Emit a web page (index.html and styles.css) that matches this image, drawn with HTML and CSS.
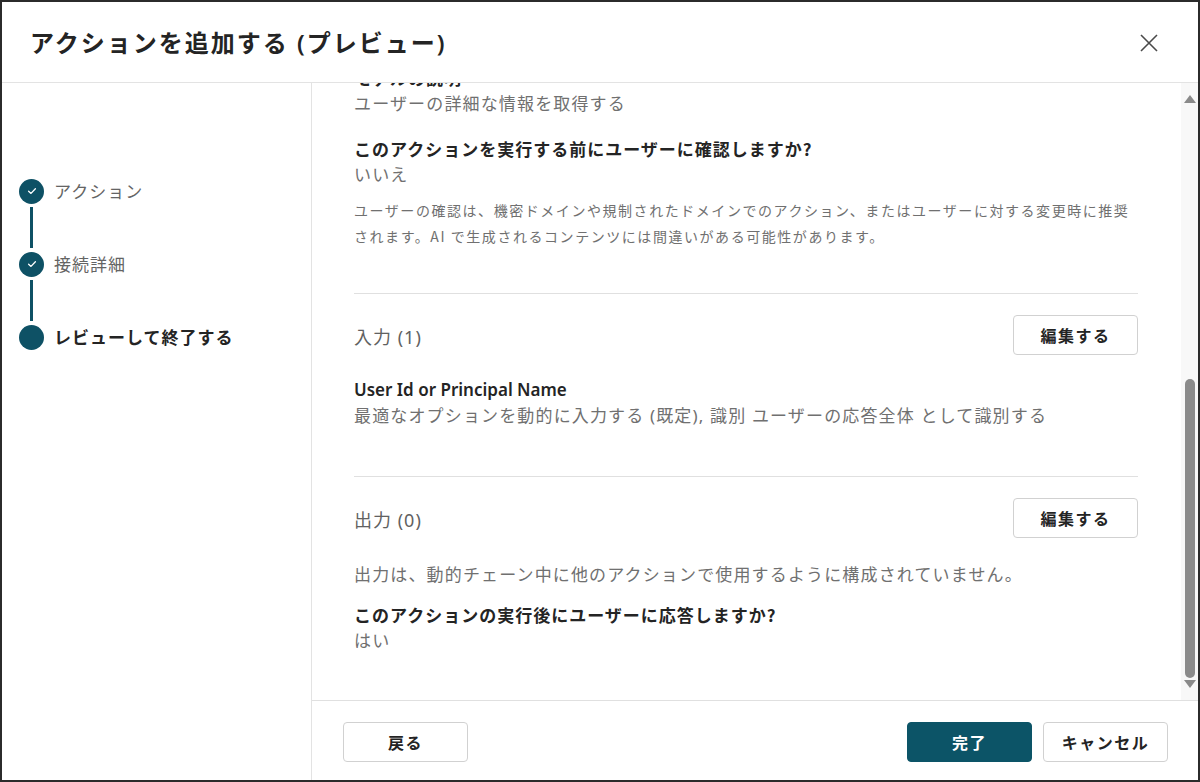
FILE: index.html
```html
<!DOCTYPE html>
<html lang="ja">
<head>
<meta charset="utf-8">
<title>アクションを追加する</title>
<link rel="stylesheet" href="styles.css">
</head>
<body>
<div class="dialog">
  <header class="dlg-header">
    <h1 class="dlg-title">アクションを追加する (プレビュー)</h1>
    <button class="close-btn" aria-label="閉じる">
      <svg width="18" height="18" viewBox="0 0 18 18"><path d="M1 1 L17 17 M17 1 L1 17" stroke="#4a4a4a" stroke-width="1.6" fill="none"/></svg>
    </button>
  </header>
  <div class="dlg-main">
    <nav class="stepper">
      <div class="step done">
        <span class="step-dot"><svg width="12" height="12" viewBox="0 0 12 12"><path d="M2.6 6.2 L5 8.4 L9.4 3.8" stroke="#fff" stroke-width="1.3" fill="none" stroke-linecap="round" stroke-linejoin="round"/></svg></span>
        <span class="step-label">アクション</span>
      </div>
      <div class="step-line"></div>
      <div class="step done">
        <span class="step-dot"><svg width="12" height="12" viewBox="0 0 12 12"><path d="M2.6 6.2 L5 8.4 L9.4 3.8" stroke="#fff" stroke-width="1.3" fill="none" stroke-linecap="round" stroke-linejoin="round"/></svg></span>
        <span class="step-label">接続詳細</span>
      </div>
      <div class="step-line"></div>
      <div class="step current">
        <span class="step-dot"></span>
        <span class="step-label">レビューして終了する</span>
      </div>
    </nav>
    <section class="panel">
      <div class="scroll-area">
        <div class="scroll-content">
          <div class="inner">
            <div class="f-label">モデルの説明</div>
            <div class="f-value">ユーザーの詳細な情報を取得する</div>
            <div class="f-label gap-19">このアクションを実行する前にユーザーに確認しますか?</div>
            <div class="f-value">いいえ</div>
            <p class="hint">ユーザーの確認は、機密ドメインや規制されたドメインでのアクション、またはユーザーに対する変更時に推奨されます。AI で生成されるコンテンツには間違いがある可能性があります。</p>

            <hr class="divider d-44">
            <div class="sec-head">
              <span class="sec-title">入力 (1)</span>
              <button class="btn">編集する</button>
            </div>
            <div class="param-name">User Id or Principal Name</div>
            <div class="f-value">最適なオプションを動的に入力する (既定), 識別 ユーザーの応答全体 として識別する</div>

            <hr class="divider d-47">
            <div class="sec-head">
              <span class="sec-title">出力 (0)</span>
              <button class="btn">編集する</button>
            </div>
            <div class="f-value gap-24">出力は、動的チェーン中に他のアクションで使用するように構成されていません。</div>
            <div class="f-label gap-14">このアクションの実行後にユーザーに応答しますか?</div>
            <div class="f-value">はい</div>
          </div>
        </div>
        <div class="scrollbar">
          <span class="sb-up"></span>
          <div class="sb-track"><div class="sb-thumb"></div></div>
          <span class="sb-down"></span>
        </div>
      </div>
      <footer class="dlg-footer">
        <button class="btn">戻る</button>
        <div class="footer-right">
          <button class="btn primary">完了</button>
          <button class="btn">キャンセル</button>
        </div>
      </footer>
    </section>
  </div>
</div>
</body>
</html>
```

FILE: styles.css
```css
* { box-sizing: border-box; }
html, body { margin: 0; padding: 0; background: #fff; }
body {
  font-family: "Noto Sans", "Noto Sans CJK JP", sans-serif;
  color: #242424;
}
.dialog {
  width: 1200px;
  height: 782px;
  border: 2px solid #2b2b2b;
  display: flex;
  flex-direction: column;
  background: #fff;
  overflow: hidden;
}
.dlg-header {
  height: 81px;
  flex: none;
  border-bottom: 1px solid #e3e3e3;
  display: flex;
  align-items: center;
  justify-content: space-between;
  padding: 2px 40px 0 28px;
}
.dlg-title {
  margin: 0;
  font-size: 24px;
  letter-spacing: 2px;
  font-weight: 600;
  line-height: 32px;
  color: #242424;
}
.close-btn {
  border: 0;
  background: none;
  padding: 0;
  width: 18px;
  height: 18px;
  display: flex;
}
.dlg-main {
  flex: 1;
  display: flex;
  min-height: 0;
}
.stepper {
  width: 310px;
  flex: none;
  border-right: 1px solid #e3e3e3;
  padding: 96px 0 0 17px;
  display: flex;
  flex-direction: column;
}
.step {
  display: flex;
  align-items: center;
  height: 24px;
  gap: 10px;
}
.step-dot {
  width: 25px;
  height: 25px;
  border-radius: 50%;
  background: #0e5165;
  display: flex;
  align-items: center;
  justify-content: center;
  flex: none;
}
.step-label {
  font-family: "Noto Sans CJK JP", sans-serif;
  font-size: 17px;
  letter-spacing: 1px;
  line-height: 24px;
  color: #646464;
}
.step.current .step-label {
  color: #242424;
  font-weight: 700;
}
.step-line {
  width: 3px;
  height: 41px;
  margin: 4px 0 4px 11px;
  background: #0e5165;
}
.panel {
  flex: 1;
  display: flex;
  flex-direction: column;
  min-width: 0;
}
.scroll-area {
  flex: 1;
  display: flex;
  min-height: 0;
}
.scroll-content {
  flex: 1;
  overflow: hidden;
  padding: 0 43px 0 42px;
}
.inner {
  margin-top: -18px;
}
.f-label {
  font-family: "Noto Sans CJK JP", sans-serif;
  font-size: 17px;
  letter-spacing: 1px;
  line-height: 26px;
  font-weight: 700;
  color: #242424;
}
.f-value {
  font-size: 17px;
  letter-spacing: 1.15px;
  line-height: 26px;
  color: #707070;
}
.gap-19 { margin-top: 19px; }
.gap-24 { margin-top: 24px; }
.gap-14 { margin-top: 14px; }
.hint {
  margin: 9px 0 0;
  font-family: "Noto Sans CJK JP", sans-serif;
  font-size: 14px;
  letter-spacing: 1.55px;
  line-height: 26px;
  color: #707070;
}
.divider {
  border: 0;
  border-top: 1px solid #e0e0e0;
  margin: 0;
  height: 0;
}
.d-44 { margin-top: 44px; }
.d-47 { margin-top: 47px; }
.sec-head {
  display: flex;
  align-items: center;
  justify-content: space-between;
  padding-top: 21px;
}
.sec-title {
  font-size: 18px;
  letter-spacing: 1px;
  line-height: 26px;
  color: #616161;
  padding-top: 3px;
}
.param-name {
  margin-top: 22px;
  font-family: "Noto Sans", sans-serif;
  font-size: 17px;
  font-weight: 600;
  line-height: 26px;
  color: #242424;
}
.btn {
  width: 125px;
  height: 40px;
  border: 1px solid #d1d1d1;
  border-radius: 4px;
  background: #fff;
  font-family: "Noto Sans CJK JP", sans-serif;
  font-size: 16px;
  letter-spacing: 1.5px;
  font-weight: 700;
  color: #242424;
  padding: 0;
}
.btn.primary {
  background: #0c5467;
  border-color: #0c5467;
  color: #fff;
}
.scrollbar {
  width: 17px;
  flex: none;
  background: #f8f8f8;
  display: flex;
  flex-direction: column;
  align-items: center;
  padding: 12px 0 12px;
}
.sb-up {
  width: 0;
  height: 0;
  border-left: 6px solid transparent;
  border-right: 6px solid transparent;
  border-bottom: 8px solid #8a8a8a;
}
.sb-down {
  width: 0;
  height: 0;
  border-left: 6px solid transparent;
  border-right: 6px solid transparent;
  border-top: 8px solid #8a8a8a;
}
.sb-track {
  flex: 1;
  width: 100%;
  display: flex;
  flex-direction: column;
  justify-content: flex-end;
  align-items: center;
}
.sb-thumb {
  width: 10px;
  height: 299px;
  margin-bottom: 2px;
  border-radius: 5px;
  background: #8b8b8b;
}
.dlg-footer {
  height: 80px;
  flex: none;
  border-top: 1px solid #e0e0e0;
  display: flex;
  align-items: flex-start;
  justify-content: space-between;
  padding: 21px 30px 0 31px;
}
.footer-right {
  display: flex;
  gap: 11px;
}
```
